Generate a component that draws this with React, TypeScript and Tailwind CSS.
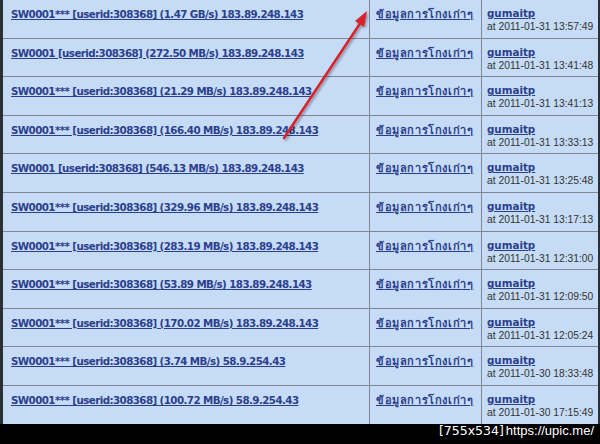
import React from 'react';

type Row = { title: string; at: string };

const rows: Row[] = [
  { title: 'SW0001*** [userid:308368] (1.47 GB/s) 183.89.248.143', at: '2011-01-31 13:57:49' },
  { title: 'SW0001 [userid:308368] (272.50 MB/s) 183.89.248.143', at: '2011-01-31 13:41:48' },
  { title: 'SW0001*** [userid:308368] (21.29 MB/s) 183.89.248.143', at: '2011-01-31 13:41:13' },
  { title: 'SW0001*** [userid:308368] (166.40 MB/s) 183.89.248.143', at: '2011-01-31 13:33:13' },
  { title: 'SW0001 [userid:308368] (546.13 MB/s) 183.89.248.143', at: '2011-01-31 13:25:48' },
  { title: 'SW0001*** [userid:308368] (329.96 MB/s) 183.89.248.143', at: '2011-01-31 13:17:13' },
  { title: 'SW0001*** [userid:308368] (283.19 MB/s) 183.89.248.143', at: '2011-01-31 12:31:00' },
  { title: 'SW0001*** [userid:308368] (53.89 MB/s) 183.89.248.143', at: '2011-01-31 12:09:50' },
  { title: 'SW0001*** [userid:308368] (170.02 MB/s) 183.89.248.143', at: '2011-01-31 12:05:24' },
  { title: 'SW0001*** [userid:308368] (3.74 MB/s) 58.9.254.43', at: '2011-01-30 18:33:48' },
  { title: 'SW0001*** [userid:308368] (100.72 MB/s) 58.9.254.43', at: '2011-01-30 17:15:49' },
];

const font = { fontFamily: '"DejaVu Sans", "Noto Sans", sans-serif' };

export default function App() {
  return (
    <div className="relative w-[600px] h-[444px] overflow-hidden bg-black" style={font}>
      <div className="absolute left-0 top-[-1px] w-[600px] border-l-[3px] border-r-[2px] border-[#2b2f36]">
        {rows.map((r, i) => (
          <div key={i} className="flex h-[38.6px] bg-[#c5dbf6] border-t border-[#7d8795] text-[10.3px] leading-[13px]">
            <div className="w-[367px] shrink-0 border-r border-[#7d8795] pl-[8px] pt-[8px] whitespace-nowrap">
              <a className="font-bold text-[#2c3f8c] underline tracking-[-0.58px]">{r.title}</a>
            </div>
            <div className="w-[112px] shrink-0 border-r border-[#7d8795] pl-[6px] pt-[8px] whitespace-nowrap">
              <a className="text-[11px] font-bold text-[#2c3f8c] underline tracking-[0.6px]">ข้อมูลการโกงเก่าๆ</a>
            </div>
            <div className="flex-1 pl-[5px] pt-[7px] whitespace-nowrap">
              <div className="font-bold text-[#2c3f8c] underline">gumaitp</div>
              <div className="text-[#333]" style={{ fontFamily: '"Liberation Sans", sans-serif' }}>at {r.at}</div>
            </div>
          </div>
        ))}
      </div>
      <svg className="absolute left-0 top-0 pointer-events-none" width="600" height="444">
        <defs>
          <filter id="sh" x="-20%" y="-20%" width="140%" height="140%">
            <feDropShadow dx="1.5" dy="1.5" stdDeviation="1.2" floodColor="#000" floodOpacity="0.35" />
          </filter>
        </defs>
        <g filter="url(#sh)">
          <line x1="284" y1="138" x2="361" y2="22" stroke="#d9222a" strokeWidth="2.5" strokeLinecap="round" />
          <polygon points="367,11 355,21 364,27" fill="#d9222a" />
        </g>
      </svg>
      <div className="absolute right-[6px] bottom-[3px] flex items-baseline gap-[2px] text-white">
        <span className="text-[12.5px]" style={{ fontFamily: '"DejaVu Sans", sans-serif' }}>[755x534]</span>
        <span className="text-[13px]" style={{ fontFamily: '"Liberation Sans", sans-serif' }}>https://upic.me/</span>
      </div>
    </div>
  );
}
